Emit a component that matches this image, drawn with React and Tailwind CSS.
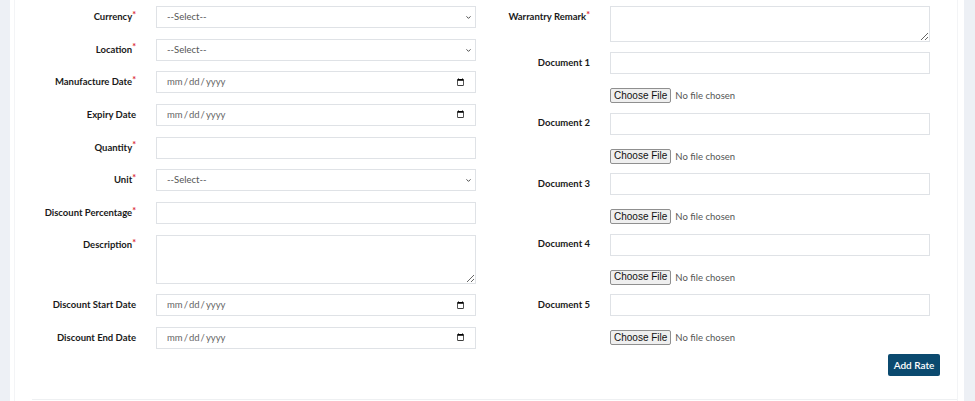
import React from 'react';
import { ChevronDown } from 'lucide-react';

const font = "font-['Lato','Liberation_Sans',sans-serif]";

function Label({ text, required, className = '' }) {
  return (
    <div className={`h-[22px] flex items-center justify-end text-[9.5px] font-bold text-[#1a1a1a] ${className}`}>
      <span>{text}</span>
      {required && <span className="text-[#dc3545] -mt-[5px] text-[9px] font-black">*</span>}
    </div>
  );
}

const boxCls =
  'block w-[320px] h-[22px] border border-[#dfe2e6] bg-white text-[9.5px] text-[#555] outline-none';

function SelectBox() {
  return (
    <div className="relative w-[320px] h-[22px]">
      <select className={`${boxCls} appearance-none pl-[10px]`}>
        <option>--Select--</option>
      </select>
      <ChevronDown className="absolute right-[4px] top-[8px] h-[7px] w-[7px] text-[#333] pointer-events-none" strokeWidth={3} />
    </div>
  );
}

function DateBox() {
  return <input type="date" className={`${boxCls} pl-[9px] pr-[8px] text-[#666]`} />;
}

function TextBox() {
  return <input type="text" className={`${boxCls} px-[10px]`} />;
}

function Area({ h }) {
  return (
    <textarea
      className="block w-[320px] border border-[#dfe2e6] bg-white outline-none text-[9.5px] px-[10px] resize-y"
      style={{ height: h }}
    />
  );
}

function Row({ label, required, children, labelW }) {
  return (
    <div className="flex items-start gap-[20px]">
      <Label text={label} required={required} className={labelW} />
      {children}
    </div>
  );
}

function FileRow() {
  return (
    <div className="h-[15px] flex items-center">
      <input
        type="file"
        className="text-[9.5px] text-[#555] file:h-[15px] file:px-[3px] file:mr-[4px] file:border file:border-[#8f8f8f] file:rounded-[2px] file:bg-[#efefef] file:text-[#111] file:text-[10px] file:font-['Liberation_Sans',sans-serif] file:leading-none"
      />
    </div>
  );
}

export default function App() {
  const leftW = 'w-[121px]';
  const rightW = 'w-[114px]';
  return (
    <div className={`${font} bg-[#edf0f5] w-[975px] h-[401px] pl-[10px] pr-[11px] overflow-hidden`}>
      <div className="bg-white h-full flex">
        <div className="w-[5px] border-r border-[#f3f4f6]" />
        <div className="flex-1 relative">
          <div className="flex">
            {/* left column */}
            <div className="w-[461px] flex flex-col gap-[10.67px] pt-[6px]">
              <Row label="Currency" required labelW={leftW}><SelectBox /></Row>
              <Row label="Location" required labelW={leftW}><SelectBox /></Row>
              <Row label="Manufacture Date" required labelW={leftW}><DateBox /></Row>
              <Row label="Expiry Date" labelW={leftW}><DateBox /></Row>
              <Row label="Quantity" required labelW={leftW}><TextBox /></Row>
              <Row label="Unit" required labelW={leftW}><SelectBox /></Row>
              <Row label="Discount Percentage" required labelW={leftW}><TextBox /></Row>
              <Row label="Description" required labelW={leftW}><Area h={49} /></Row>
              <Row label="Discount Start Date" labelW={leftW}><DateBox /></Row>
              <Row label="Discount End Date" labelW={leftW}><DateBox /></Row>
            </div>

            {/* right column */}
            <div className="w-[464px] pt-[6px] flex flex-col">
              <Row label="Warrantry Remark" required labelW={rightW}><Area h={36} /></Row>
              <div className="flex flex-col gap-[9.5px] mt-[10px]">
                {[1, 2, 3, 4, 5].map((n) => (
                  <div key={n} className="flex items-start gap-[20px]">
                    <Label text={`Document ${n}`} className={rightW} />
                    <div className="flex flex-col gap-[14px]">
                      <TextBox />
                      <FileRow />
                    </div>
                  </div>
                ))}
              </div>
              <div className="flex justify-end mt-[9px]">
                <button className="h-[22px] w-[52px] rounded-[2px] bg-[#0b4a6f] text-white text-[10px] font-semibold">
                  Add Rate
                </button>
              </div>
            </div>
          </div>
          <div className="absolute left-[17px] right-[6px] bottom-[1px] border-b border-[#eef0f2]" />
          <div className="absolute right-[6px] top-0 bottom-0 border-r border-[#f3f4f6]" />
        </div>
      </div>
    </div>
  );
}
